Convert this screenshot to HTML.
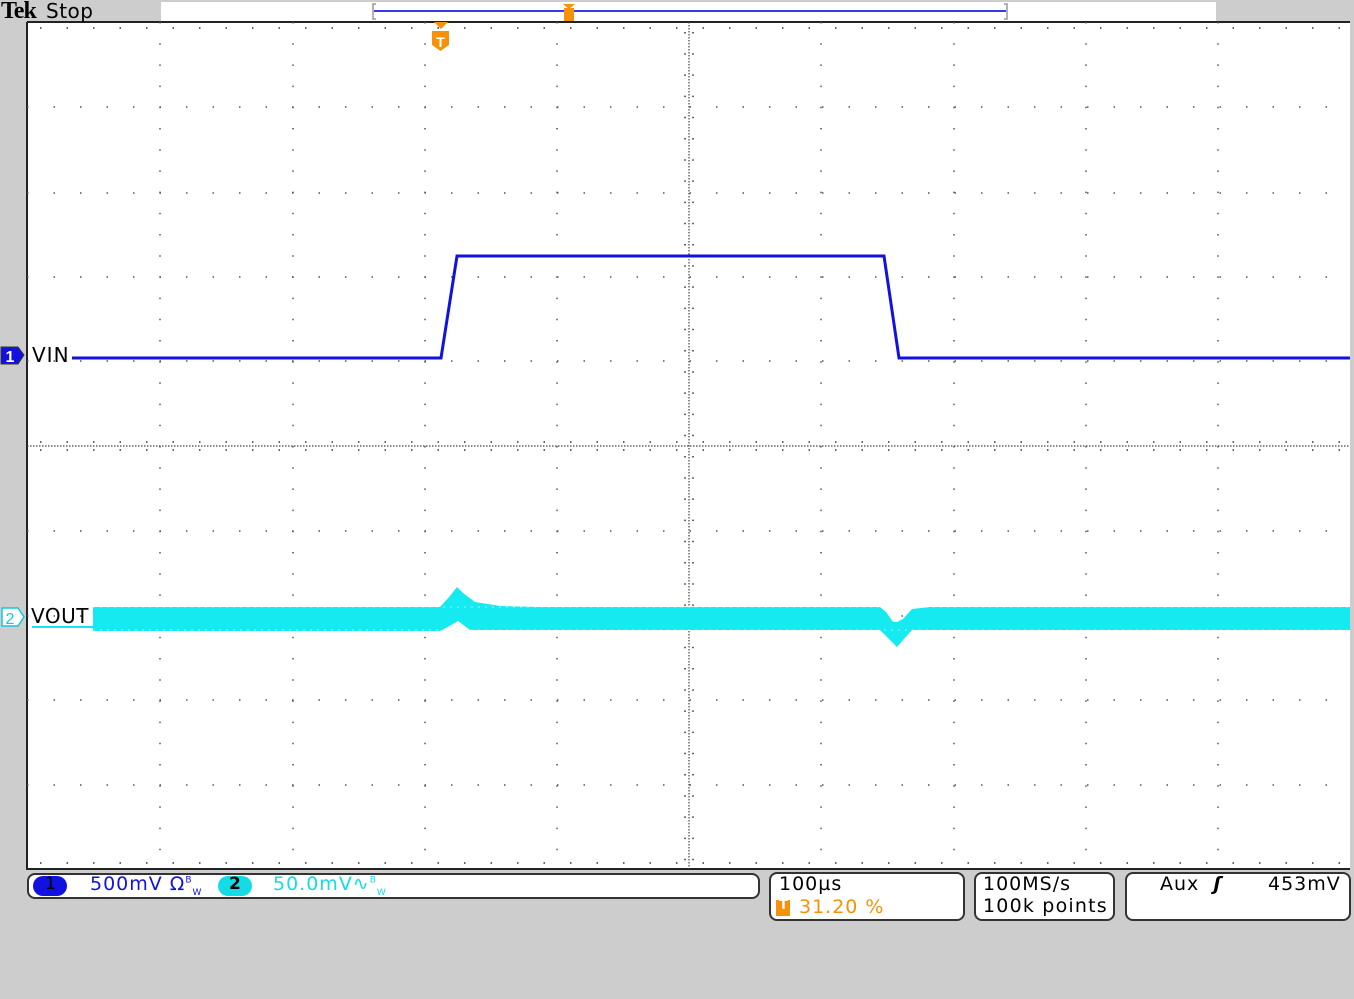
<!DOCTYPE html>
<html><head><style>
html,body{margin:0;padding:0;width:1354px;height:999px;overflow:hidden;background:#cdcdcd;font-family:"DejaVu Sans","Liberation Sans",sans-serif}
.t{position:absolute;font-size:19px;white-space:nowrap;letter-spacing:1px}
.box{position:absolute;border:2px solid #333;border-radius:8px;background:#fff;box-sizing:border-box}
</style></head><body>
<svg width="1354" height="999" style="position:absolute;left:0;top:0" xmlns="http://www.w3.org/2000/svg">
<rect x="0" y="0" width="1354" height="999" fill="#cdcdcd"/>
<rect x="161" y="2" width="1055" height="19" fill="#fff"/>
<path d="M376,4 H373 V19 H376 M1004,4 H1007 V19 H1004" stroke="#999" fill="none" stroke-width="1.5"/>
<line x1="374" y1="11" x2="1006" y2="11" stroke="#3838f0" stroke-width="2"/>
<path d="M563,4 h12 l-6,5 z" fill="#f5920a"/>
<rect x="564" y="8" width="10" height="13" fill="#f5920a"/>
<rect x="27" y="22" width="1323" height="847" fill="#fff"/>
<path d="M27,22 V869 H1350 M27,22 H1350" stroke="#222" stroke-width="2" fill="none"/>
<g stroke="#555" stroke-width="1.5" stroke-dasharray="1.5 19.7" fill="none">
<path d="M160,22V869M293,22V869M425,22V869M557,22V869M821,22V869M954,22V869M1086,22V869M1218,22V869"/>
</g>
<g stroke="#555" stroke-width="1.5" stroke-dasharray="1.5 25" fill="none">
<path d="M27,107H1350M27,193H1350M27,277H1350M27,361H1350M27,531H1350M27,616H1350M27,700H1350M27,785H1350"/>
</g>
<g stroke="#444" stroke-width="1.2" stroke-dasharray="1.5 1.5" fill="none">
<path d="M689,22V869M27,446H1350"/>
</g>
<g stroke="#333" stroke-width="1.5" fill="none">
<path d="M27,28H1350" stroke-dasharray="1.5 25" stroke-dashoffset="-13"/>
<path d="M27,863H1350" stroke-dasharray="1.5 25" stroke-dashoffset="-13"/>
<path d="M27,442H1350M27,450H1350" stroke-dasharray="1.5 25" stroke-dashoffset="-13"/>
<path d="M685,22V869M693,22V869" stroke-dasharray="1.5 19.7" stroke-dashoffset="-10"/>
</g>
<path d="M434,22 h14 l-7,7 z" fill="#f5920a"/>
<path d="M432,31 h17 v14 l-8.5,6 l-8.5,-6 z" fill="#f5920a"/>
<text x="440.5" y="47" font-size="14" font-weight="bold" fill="#fff" text-anchor="middle" font-family="Liberation Sans">T</text>
<path d="M72,358 H441 L457,256 H884 L899,358 H1350" stroke="#1212e0" stroke-width="3" fill="none"/>
<line x1="32" y1="627" x2="93" y2="627" stroke="#14e4ec" stroke-width="2"/>
<path fill="#14eaf0" d="M93,607 H440 L450,596 L457,587 L463,593 L475,602 L500,606 L540,607 H880 L886,612 L893,622 H897 L903,619 L912,609 L930,607 H1350 V630 H912 L903,640 L897,647 L890,640 L880,630 H470 L458,621 L446,628 L440,631 H93 Z"/>
<g stroke="#fff" stroke-width="1" opacity="0.55">
<path d="M93,607 H1350" stroke-dasharray="2 5"/>
<path d="M93,630 H1350" stroke-dasharray="2 5"/>
</g>
<path d="M1,347 H18 L24,355 L18,364 H1 Z" fill="#1212e0" stroke="#333"/>
<text x="10" y="362" font-size="16" fill="#fff" text-anchor="middle" font-family="Liberation Sans" font-weight="bold">1</text>
<path d="M2,608 H18 L24,617 L18,626 H2 Z" fill="#fff" stroke="#14c8d8" stroke-width="1.5"/>
<text x="10" y="624" font-size="16" fill="#14c8d8" text-anchor="middle" font-family="Liberation Sans">2</text>
</svg>
<div class="t" style="left:1px;top:-2px;font-family:'Liberation Serif',serif;font-weight:bold;font-size:24px;letter-spacing:-1px">Tek</div>
<div class="t" style="left:46px;top:-1px;font-size:20px;letter-spacing:0.5px">Stop</div>
<div class="t" style="left:32px;top:343px;font-size:20px">VIN</div>
<div class="t" style="left:31px;top:604px;font-size:20px;letter-spacing:0.5px">VOUT</div>
<div class="box" style="left:27px;top:873px;width:733px;height:26px"></div>
<div style="position:absolute;left:33px;top:876px;width:34px;height:20px;border-radius:10px;background:#1212e0"></div>
<div class="t" style="left:45px;top:874px;font-size:17px;color:#000">1</div>
<div class="t" style="left:90px;top:873px;font-size:19px;color:#1212e0">500mV Ω<sup style="font-size:9px">B</sup><sub style="font-size:9px">W</sub></div>
<div style="position:absolute;left:218px;top:876px;width:34px;height:20px;border-radius:10px;background:#14dce4"></div>
<div class="t" style="left:229px;top:874px;font-size:17px;color:#000;font-weight:bold">2</div>
<div class="t" style="left:273px;top:873px;font-size:19px;color:#14dce4">50.0mV∿<sup style="font-size:9px">B</sup><sub style="font-size:9px">W</sub></div>
<div class="box" style="left:769px;top:872px;width:196px;height:49px"></div>
<div class="t" style="left:779px;top:873px;font-size:19px">100µs</div>
<div style="position:absolute;left:776px;top:900px;width:14px;height:16px;background:#f5920a"></div>
<div class="t" style="left:779px;top:898px;font-size:13px;color:#fff;font-weight:bold">T</div>
<div class="t" style="left:799px;top:896px;font-size:19px;color:#f5920a">31.20 %</div>
<div class="box" style="left:974px;top:872px;width:141px;height:49px"></div>
<div class="t" style="left:983px;top:873px;font-size:19px">100MS/s</div>
<div class="t" style="left:983px;top:895px;font-size:19px;letter-spacing:1.2px">100k points</div>
<div class="box" style="left:1125px;top:872px;width:226px;height:49px"></div>
<div class="t" style="left:1160px;top:873px;font-size:19px">Aux &nbsp;<b><i>ʃ</i></b></div>
<div class="t" style="left:1268px;top:873px;font-size:19px">453mV</div>
</body></html>
